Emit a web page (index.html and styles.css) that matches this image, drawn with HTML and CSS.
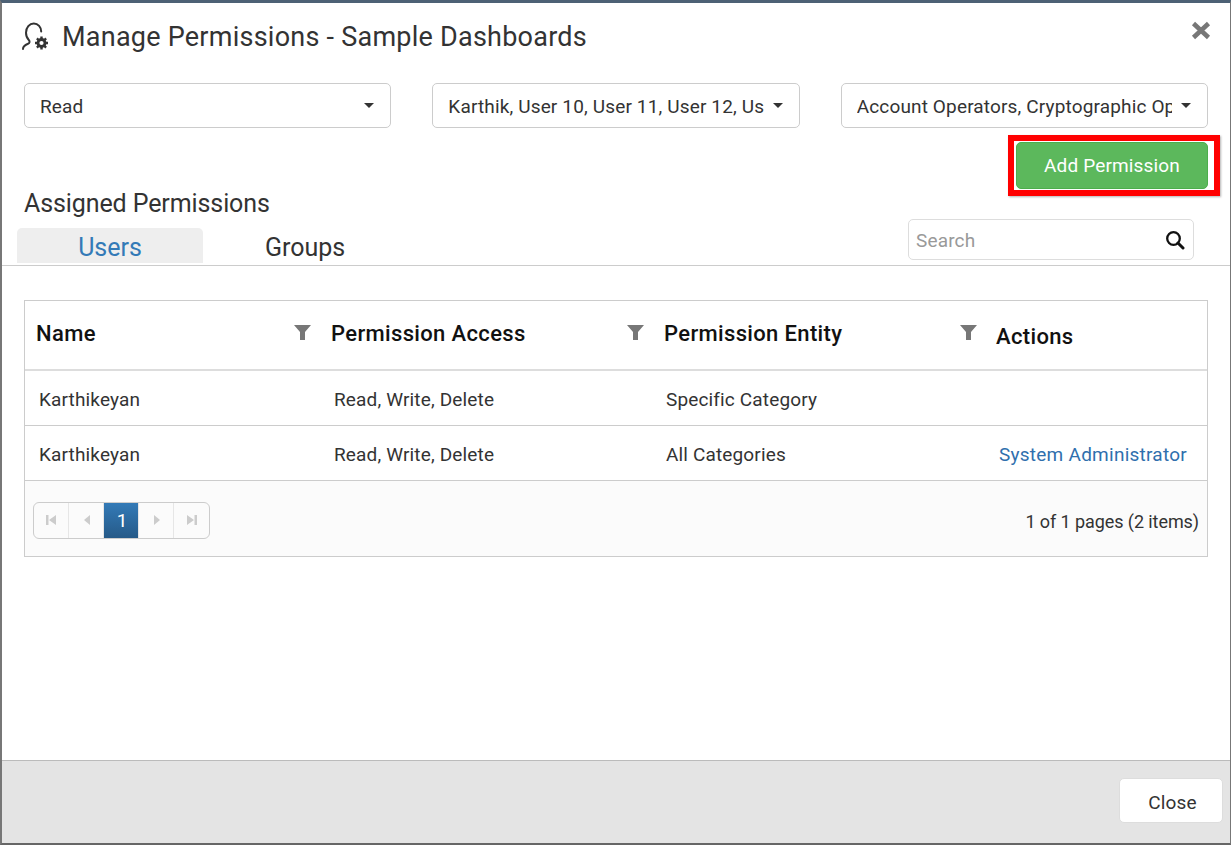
FILE: index.html
```html
<!DOCTYPE html>
<html lang="en">

<head>
    <meta charset="UTF-8">
    <title>Manage Permissions</title>
    <link rel="stylesheet" href="styles.css">
</head>

<body>
    <div class="modal">

        <div class="modal-header">
            <svg class="title-icon" width="28" height="30" viewBox="0 0 28 30">
                <path d="M1 27c0-2.600 2-4 5-5.200 1.800-.8 2-2.500 .8-3.800C5 16.200 4 13.500 4 10.700 4 5.500 7.500 1.500 11.800 1.500c4.300 0 7.400 3.500 7.400 8" fill="none" stroke="#333" stroke-width="2" stroke-linecap="round" />
                <g fill="none" stroke="#333">
                    <circle cx="19.500" cy="21" r="3.500" stroke-width="2.800" />
                    <path d="M19.500 14.500v3M19.500 24.500v3M13 21h3M23 21h3M14.900 16.400l2.100 2.100M22 23.500l2.100 2.100M14.900 25.600l2.100-2.100M22 18.500l2.100-2.100" stroke-width="2.400" />
                </g>
            </svg>
            <h1 class="modal-title">Manage Permissions - Sample Dashboards</h1>
            <svg class="close-x" width="20" height="19" viewBox="0 0 20 19">
                <path d="M2.500 2.500l15 14M17.500 2.500l-15 14" stroke="#777" stroke-width="4.600" />
            </svg>
        </div>

        <div class="dropdown-row">
            <div class="dropdown"><span class="dropdown-text">Read</span><span class="caret"></span></div>
            <div class="dropdown"><span class="dropdown-text">Karthik, User 10, User 11, User 12, User 13</span><span class="caret"></span></div>
            <div class="dropdown"><span class="dropdown-text">Account Operators, Cryptographic Operators</span><span class="caret"></span></div>
        </div>

        <div class="add-row">
            <button class="add-btn">Add Permission</button>
            <div class="red-box"></div>
        </div>

        <h2 class="section-title">Assigned Permissions</h2>

        <div class="tabs-row">
            <div class="tab tab-active">Users</div>
            <div class="tab">Groups</div>
            <div class="search">
                <span class="search-text">Search</span>
                <svg width="20" height="20" viewBox="0 0 20 20">
                    <circle cx="8.500" cy="8.500" r="6.300" fill="none" stroke="#111" stroke-width="2.300" />
                    <path d="M13 13l5 5" stroke="#111" stroke-width="3" stroke-linecap="round" />
                </svg>
            </div>
        </div>

        <div class="grid-wrap">
            <table class="grid">
                <colgroup>
                    <col class="col-name">
                    <col class="col-access">
                    <col class="col-entity">
                    <col>
                </colgroup>
                <thead>
                    <tr>
                        <th>
                            <div class="th-inner">Name
                                <svg class="filter" width="17" height="17" viewBox="0 0 17 17"><path d="M0 1h17l-6 7v8H6V8z" fill="#777" /></svg>
                            </div>
                        </th>
                        <th>
                            <div class="th-inner">Permission Access
                                <svg class="filter" width="17" height="17" viewBox="0 0 17 17"><path d="M0 1h17l-6 7v8H6V8z" fill="#777" /></svg>
                            </div>
                        </th>
                        <th>
                            <div class="th-inner">Permission Entity
                                <svg class="filter" width="17" height="17" viewBox="0 0 17 17"><path d="M0 1h17l-6 7v8H6V8z" fill="#777" /></svg>
                            </div>
                        </th>
                        <th class="th-actions">Actions</th>
                    </tr>
                </thead>
                <tbody>
                    <tr>
                        <td>Karthikeyan</td>
                        <td>Read, Write, Delete</td>
                        <td>Specific Category</td>
                        <td></td>
                    </tr>
                    <tr>
                        <td>Karthikeyan</td>
                        <td>Read, Write, Delete</td>
                        <td>All Categories</td>
                        <td><a class="role-link" href="#">System Administrator</a></td>
                    </tr>
                </tbody>
            </table>

            <div class="pager-bar">
                <div class="pager">
                    <span class="page-cell"><svg width="12" height="12" viewBox="0 0 12 12"><path d="M1 1h2.500v10H1zM11 1v10L4 6z" fill="#ccc" /></svg></span>
                    <span class="page-cell"><svg width="12" height="12" viewBox="0 0 12 12"><path d="M10 1v10L4 6z" fill="#ccc" /></svg></span>
                    <span class="page-cell page-current">1</span>
                    <span class="page-cell"><svg width="12" height="12" viewBox="0 0 12 12"><path d="M4 1v10l6-5z" fill="#ccc" /></svg></span>
                    <span class="page-cell"><svg width="12" height="12" viewBox="0 0 12 12"><path d="M1 1v10l7-5zM8.500 1H11v10H8.500z" fill="#ccc" /></svg></span>
                </div>
                <span class="page-info">1 of 1 pages (2 items)</span>
            </div>
        </div>

        <div class="modal-footer">
            <button class="close-btn">Close</button>
        </div>

    </div>
</body>

</html>
```

FILE: styles.css
```css
* {
    box-sizing: border-box;
}

html,
body {
    margin: 0;
    height: 100%;
}

body {
    font-family: Roboto, "Liberation Sans", sans-serif;
    color: #333;
    background-color: #fff;
    overflow: hidden;
}

.modal {
    height: 845px;
    display: flex;
    flex-direction: column;
    border-top: 3px solid #4d6175;
    border-left: 2px solid #777;
    border-right: 1px solid #777;
    border-bottom: 2px solid #666;
}

.modal-header {
    height: 80px;
    padding: 19px 19px 0 20px;
    display: flex;
    align-items: flex-start;
}

.title-icon {
    margin-right: 12px;
    flex-shrink: 0;
}

.modal-title {
    margin: 0;
    font-size: 27px;
    font-weight: 400;
    line-height: 30px;
    letter-spacing: 0.24px;
    flex-grow: 1;
}

.close-x {
    flex-shrink: 0;
    margin-top: -1px;
}

.dropdown-row {
    display: grid;
    grid-template-columns: repeat(3, minmax(0, 1fr));
    gap: 41px;
    padding: 0 22px;
}

.dropdown {
    height: 45px;
    padding: 0 16px 0 15px;
    display: flex;
    align-items: center;
    border: 1px solid #ccc;
    border-radius: 5px;
    font-size: 19px;
    letter-spacing: 0.15px;
}

.dropdown-text {
    flex-grow: 1;
    padding-top: 2px;
    white-space: nowrap;
    overflow: hidden;
}

.caret {
    width: 0;
    height: 0;
    margin-left: 9px;
    flex-shrink: 0;
    border-top: 5px solid #333;
    border-left: 5.500px solid transparent;
    border-right: 5.500px solid transparent;
}

.add-row {
    position: relative;
    display: flex;
    justify-content: flex-end;
    padding: 14px 22px 0 0;
}

.add-btn {
    width: 192px;
    height: 47px;
    background-color: #5cb85c;
    border: 1px solid #4cae4c;
    border-radius: 5px;
    color: #fff;
    font-family: inherit;
    font-size: 19px;
    letter-spacing: 0.15px;
}

.red-box {
    position: absolute;
    top: 7px;
    right: 10px;
    width: 212px;
    height: 61px;
    border: 6px solid #f00;
    box-shadow: 1px 1px 2px rgba(0, 0, 0, 0.3);
}

.section-title {
    margin: 0;
    padding: 1px 22px 0;
    font-size: 25px;
    font-weight: 400;
    line-height: 28px;
    letter-spacing: -0.1px;
}

.tabs-row {
    position: relative;
    height: 38px;
    margin-top: 10px;
    padding-left: 15px;
    display: flex;
    align-items: flex-start;
    border-bottom: 1px solid #ccc;
}

.tab {
    width: 186px;
    height: 35px;
    margin-right: 9px;
    text-align: center;
    font-size: 25px;
    line-height: 40px;
}

.tab-active {
    background-color: #eee;
    border-radius: 5px 5px 0 0;
    color: #337ab7;
}

.search {
    position: absolute;
    top: -9px;
    right: 36px;
    width: 286px;
    height: 41px;
    padding: 0 8px 0 7px;
    display: flex;
    align-items: center;
    justify-content: space-between;
    border: 1px solid #ddd;
    border-radius: 5px;
    background-color: #fff;
}

.search-text {
    padding-top: 2px;
    font-size: 19px;
    letter-spacing: 0.15px;
    color: #999;
}

.grid-wrap {
    margin: 34px 22px 0;
    border: 1px solid #ccc;
}

.grid {
    width: 100%;
    table-layout: fixed;
    border-collapse: collapse;
}

.col-name {
    width: 295px;
}

.col-access {
    width: 333px;
}

.col-entity {
    width: 333px;
}

.grid th {
    height: 69px;
    padding: 0 0 0 11px;
    border-bottom: 2px solid #ddd;
    text-align: left;
    font-size: 22px;
    font-weight: 500;
    letter-spacing: 0.35px;
    color: #111;
}

.th-inner {
    display: flex;
    justify-content: space-between;
    align-items: flex-start;
    padding-right: 9px;
    margin-top: -3px;
}

.filter {
    margin-top: 3px;
}

.grid .th-actions {
    padding: 3px 0 0 10px;
}

.grid td {
    height: 55px;
    padding: 4px 0 0 14px;
    border-bottom: 1px solid #ccc;
    font-size: 19px;
    letter-spacing: 0.15px;
}

.grid td:nth-child(n+3) {
    padding-left: 13px;
}

.role-link {
    color: #2f6fad;
    letter-spacing: 0.25px;
    text-decoration: none;
}

.pager-bar {
    height: 75px;
    padding: 4px 8px 0 8px;
    display: flex;
    align-items: center;
    justify-content: space-between;
    background-color: #fbfbfb;
}

.pager {
    display: flex;
    height: 37px;
    border: 1px solid #ccc;
    border-radius: 6px;
    overflow: hidden;
}

.page-cell {
    width: 35px;
    display: flex;
    align-items: center;
    justify-content: center;
    border-right: 1px solid #e6e6e6;
}

.page-cell:last-child {
    border-right: none;
}

.page-current {
    padding-left: 2px;
    background: linear-gradient(#337ab7, #265a88);
    color: #fff;
    font-size: 19px;
}

.page-info {
    margin-top: 2px;
    font-size: 18px;
    letter-spacing: -0.08px;
}

.modal-footer {
    margin-top: auto;
    height: 83px;
    padding: 17px 7px 0 0;
    display: flex;
    justify-content: flex-end;
    align-items: flex-start;
    background-color: #e4e4e4;
    border-top: 1px solid #bbb;
}

.close-btn {
    width: 104px;
    height: 45px;
    padding: 4px 0 0 3px;
    background-color: #fff;
    border: 1px solid #ddd;
    border-radius: 5px;
    color: #333;
    font-family: inherit;
    font-size: 19px;
    letter-spacing: 0.15px;
}
```
